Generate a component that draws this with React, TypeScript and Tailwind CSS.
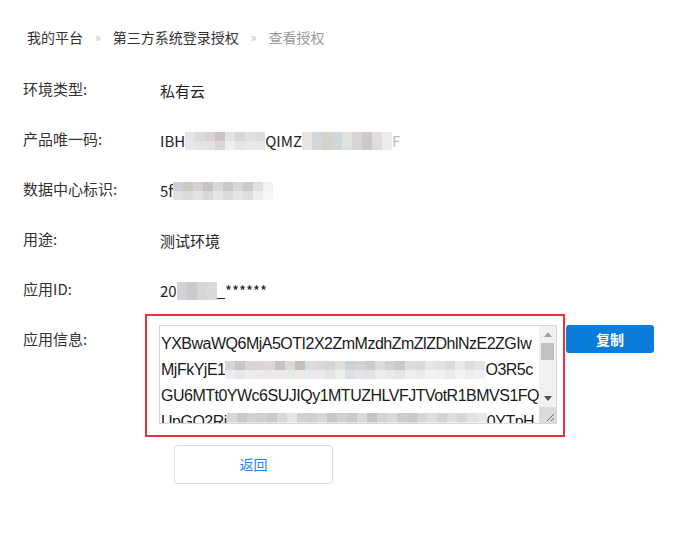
import React from "react";

const CJK = "font-['Microsoft_YaHei','Noto_Sans_CJK_SC',sans-serif]";

type Tile = string;

// blurred (mosaic) pieces of the screenshot
function Mosaic({ top, bottom }: { top: Tile[]; bottom?: Tile[] }) {
  return (
    <span className="inline-flex flex-col align-middle">
      <span className="flex">
        {top.map((c, i) => (
          <span key={i} className={`h-[9px] w-[10px] ${c}`} />
        ))}
      </span>
      {bottom && (
        <span className="flex">
          {bottom.map((c, i) => (
            <span key={i} className={`h-[9px] w-[10px] ${c}`} />
          ))}
        </span>
      )}
    </span>
  );
}

const rowA = ["bg-[#e4e4e8]", "bg-[#d9dbd7]", "bg-[#d8d2d6]", "bg-[#ccc2c8]", "bg-[#e3e3e3]", "bg-[#d6d6d6]", "bg-[#e2e0de]", "bg-[#dcdcdc]"];
const rowB = ["bg-[#e8e8ea]", "bg-[#e2e4e0]", "bg-[#e6e0e4]", "bg-[#dcd4d8]", "bg-[#eeeeee]", "bg-[#e4e4e4]", "bg-[#ebe9e7]", "bg-[#e8e8e8]"];
const rowC = ["bg-[#e8e4e4]", "bg-[#d4d6da]", "bg-[#d5d2c8]", "bg-[#cfd7d9]", "bg-[#dfe2df]", "bg-[#d7d3d6]", "bg-[#c9c9c9]", "bg-[#e0dcdf]", "bg-[#ececec]"];
const rowD = ["bg-[#d0d0d4]", "bg-[#c9cac5]", "bg-[#d4d0d2]", "bg-[#c4c4c6]", "bg-[#d7d7d9]", "bg-[#c8c8c8]", "bg-[#d6d6d6]", "bg-[#cacaca]", "bg-[#e0e0e0]", "bg-[#f2f2f2]"];
const rowD2 = ["bg-[#e0e0e2]", "bg-[#dcdcda]", "bg-[#e4e2e2]", "bg-[#d8d8da]", "bg-[#e6e6e8]", "bg-[#dcdcdc]", "bg-[#e6e6e6]", "bg-[#dedede]", "bg-[#eeeeee]", "bg-[#f6f6f6]"];
const rowE = ["bg-[#d2d2d4]", "bg-[#cacacc]", "bg-[#d6d6d6]", "bg-[#dadada]"];
const longTop = ["bg-[#d4d6da]", "bg-[#c6c5cc]", "bg-[#d7d3d6]", "bg-[#dcd4d2]", "bg-[#d8d8d8]", "bg-[#c9c1bf]", "bg-[#d8dcd8]", "bg-[#c6beb8]", "bg-[#d6dce2]", "bg-[#dcd6d8]", "bg-[#d5d5d9]", "bg-[#dddfdb]", "bg-[#c9d1d9]", "bg-[#d1d1d7]", "bg-[#cccccc]", "bg-[#d9dbd6]", "bg-[#d1d1d3]", "bg-[#c8c8ca]", "bg-[#dcdcdc]", "bg-[#d8d8d8]", "bg-[#e6e6e6]", "bg-[#e2e2e2]", "bg-[#dadada]", "bg-[#e9e9e9]", "bg-[#dddddd]", "bg-[#e4e4e4]"];
const longBot = ["bg-[#eceef0]", "bg-[#e6e6ea]", "bg-[#ececec]", "bg-[#eeeaea]", "bg-[#e8e8e8]", "bg-[#ebe7e6]", "bg-[#e6ebe8]", "bg-[#ece9e6]", "bg-[#e8ecef]", "bg-[#ede8ea]", "bg-[#e4e4e6]", "bg-[#ecefea]", "bg-[#dce0e3]", "bg-[#e4e4e8]", "bg-[#e2e2e2]", "bg-[#ececec]", "bg-[#e8e8ea]", "bg-[#e4e4e6]", "bg-[#eeeeee]", "bg-[#ececec]", "bg-[#f2f2f2]", "bg-[#f0f0f0]", "bg-[#eaeaea]", "bg-[#f4f4f4]", "bg-[#eeeeee]", "bg-[#f2f2f2]"];
const long2Top = ["bg-[#d6d6d6]", "bg-[#c8c8cc]", "bg-[#d2d2d2]", "bg-[#cfcfcf]", "bg-[#c9c9c9]", "bg-[#d8d8d8]", "bg-[#e6e6e6]", "bg-[#d4d0d2]", "bg-[#cfcfcf]", "bg-[#d8d8d8]", "bg-[#c6c6c6]", "bg-[#d0d0d0]", "bg-[#cacaca]", "bg-[#d9d9d9]", "bg-[#c3c3c3]", "bg-[#d2d2d2]", "bg-[#dadada]", "bg-[#cccccc]", "bg-[#c8c8c8]", "bg-[#d6d6d6]", "bg-[#dedede]", "bg-[#d3d3d3]", "bg-[#dddddd]", "bg-[#d6d6d6]", "bg-[#e2e2e2]", "bg-[#e8e8e8]"];
const long2Bot = ["bg-[#eeeeee]", "bg-[#e6e6e8]", "bg-[#ececec]", "bg-[#e8e8e8]", "bg-[#e4e4e4]", "bg-[#f0f0f0]", "bg-[#f6f6f6]", "bg-[#eae8e9]", "bg-[#e8e8e8]", "bg-[#f2f2f2]", "bg-[#e4e4e4]", "bg-[#ebebeb]", "bg-[#e6e6e6]", "bg-[#f0f0f0]", "bg-[#e2e2e2]", "bg-[#ececec]", "bg-[#f2f2f2]", "bg-[#e8e8e8]", "bg-[#e4e4e4]", "bg-[#f0f0f0]", "bg-[#f4f4f4]", "bg-[#eeeeee]", "bg-[#f4f4f4]", "bg-[#f0f0f0]", "bg-[#f6f6f6]", "bg-[#f8f8f8]"];

function Row({ label, children, short }: { label: string; children: React.ReactNode; short?: boolean }) {
  return (
    <div className={`flex items-start ${short ? "h-[35px]" : "h-[50px]"}`}>
      <div className="w-[160px] shrink-0 pl-[23px] text-[15px] leading-[20px] text-[#333]">{label}</div>
      <div className="pt-[2px] text-[15px] leading-[20px] text-[#222]">{children}</div>
    </div>
  );
}

function FakeScrollbar() {
  return (
    <div className="flex w-[17px] shrink-0 flex-col bg-[#f1f1f1]">
      <div className="flex h-[17px] items-center justify-center">
        <svg width="8" height="5" viewBox="0 0 8 5">
          <path d="M0 5 L4 0 L8 5 Z" fill="#a3a3a3" />
        </svg>
      </div>
      <div className="mx-[2px] h-[17px] bg-[#c1c1c1]" />
      <div className="flex-1" />
      <div className="flex h-[17px] items-center justify-center">
        <svg width="8" height="5" viewBox="0 0 8 5">
          <path d="M0 0 L8 0 L4 5 Z" fill="#505050" />
        </svg>
      </div>
      <div className="flex h-[16px] items-end justify-end bg-[#dcdcdc] pb-[2px] pr-[2px]">
        <svg width="8" height="8" viewBox="0 0 8 8">
          <path d="M1 8 L8 1 M5 8 L8 5" stroke="#666" strokeWidth="1" />
        </svg>
      </div>
    </div>
  );
}

export default function App() {
  return (
    <main className={`min-h-screen w-[693px] bg-white ${CJK}`}>
      <nav className="flex h-[79px] items-start pl-[27px] pt-[27px] text-[14px] leading-[20px]">
        <span className="text-[#333]">我的平台</span>
        <span className="mx-[12px] text-[12px] text-[#bbb]">»</span>
        <span className="text-[#333]">第三方系统登录授权</span>
        <span className="mx-[12px] text-[12px] text-[#bbb]">»</span>
        <span className="text-[#999]">查看授权</span>
      </nav>

      <Row label="环境类型:">私有云</Row>
      <Row label="产品唯一码:">
        <span className="inline-flex items-center">
          IBH
          <Mosaic top={rowA} bottom={rowB} />
          QIMZ
          <Mosaic top={rowC} bottom={rowC} />
          <span className="text-[#bbb]">F</span>
        </span>
      </Row>
      <Row label="数据中心标识:">
        <span className="inline-flex items-center">
          5f
          <Mosaic top={rowD} bottom={rowD2} />
        </span>
      </Row>
      <Row label="用途:">测试环境</Row>
      <Row label="应用ID:" short>
        <span className="inline-flex items-center">
          20
          <Mosaic top={rowE} bottom={rowE} />
          _******
        </span>
      </Row>

      <div className="flex items-start">
        <div className="w-[145px] shrink-0 pl-[23px] pt-[15px] text-[15px] leading-[20px] text-[#333]">应用信息:</div>
        <div className="border-2 border-[#e8333d] pb-[11px] pl-[12px] pr-[6px] pt-[9px]">
          <div className="flex h-[99px] w-[398px] border border-[#d7d7d7] bg-white">
            <div className="flex-1 overflow-hidden pl-[1px] pt-[5px] font-['Liberation_Sans',Arial,sans-serif] text-[16px] leading-[26px] tracking-[-0.5px] text-[#1a1a1a]">
              <div className="whitespace-nowrap">YXBwaWQ6MjA5OTI2X2ZmMzdhZmZlZDhlNzE2ZGIw</div>
              <div className="flex items-center whitespace-nowrap">
                MjFkYjE1
                <Mosaic top={longTop} bottom={longBot} />
                O3R5c
              </div>
              <div className="whitespace-nowrap">GU6MTt0YWc6SUJIQy1MTUZHLVFJTVotR1BMVS1FQ</div>
              <div className="flex items-center whitespace-nowrap">
                UpGO2Ri
                <Mosaic top={long2Top} bottom={long2Bot} />
                0YTpH
              </div>
            </div>
            <FakeScrollbar />
          </div>
        </div>
        <button
          type="button"
          className="ml-px mt-[11px] h-[28px] w-[88px] rounded-[3px] bg-[#0a7ddb] text-[14px] font-semibold text-white"
        >
          复制
        </button>
      </div>

      <div className="pl-[174px] pt-[8px]">
        <button
          type="button"
          className="h-[39px] w-[159px] rounded-[4px] border border-[#dcdcdc] bg-white text-[14px] text-[#1e88f0]"
        >
          返回
        </button>
      </div>
    </main>
  );
}
